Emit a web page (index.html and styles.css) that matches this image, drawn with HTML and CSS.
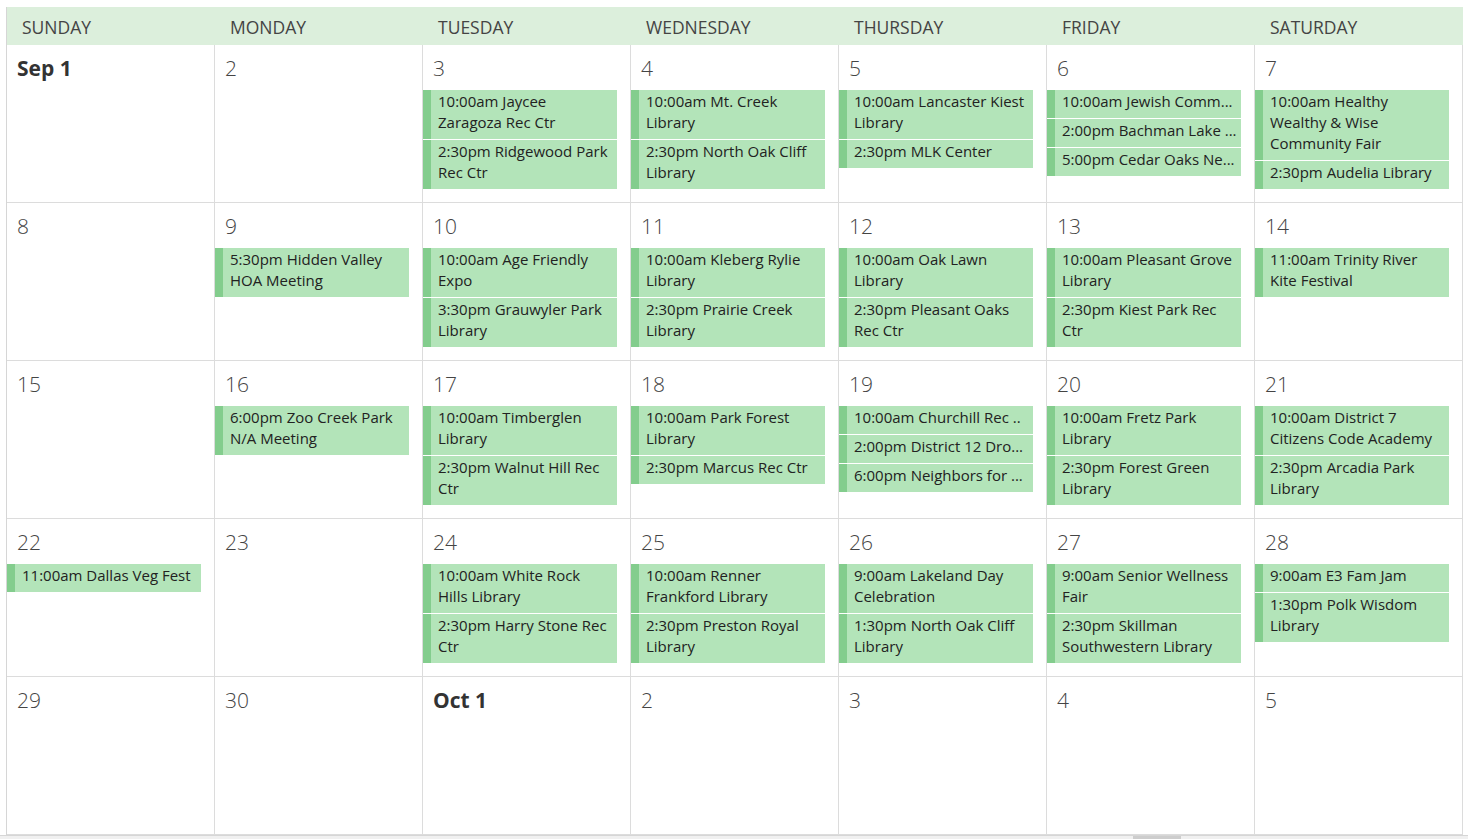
FILE: index.html
```html
<!DOCTYPE html>
<html lang="en">

<head>
    <meta charset="UTF-8">
    <meta name="viewport" content="width=device-width, initial-scale=1.0">
    <title>Calendar - September</title>
    <link rel="stylesheet" href="styles.css">
</head>

<body>
    <div class="calendar">
        <div class="weekdays">
            <div class="weekday">SUNDAY</div>
            <div class="weekday">MONDAY</div>
            <div class="weekday">TUESDAY</div>
            <div class="weekday">WEDNESDAY</div>
            <div class="weekday">THURSDAY</div>
            <div class="weekday">FRIDAY</div>
            <div class="weekday">SATURDAY</div>
        </div>

        <div class="week">
            <div class="day"><div class="num first">Sep 1</div></div>
            <div class="day"><div class="num">2</div></div>
            <div class="day">
                <div class="num">3</div>
                <div class="event">10:00am Jaycee<br>Zaragoza Rec Ctr</div>
                <div class="event">2:30pm Ridgewood Park<br>Rec Ctr</div>
            </div>
            <div class="day">
                <div class="num">4</div>
                <div class="event">10:00am Mt. Creek<br>Library</div>
                <div class="event">2:30pm North Oak Cliff<br>Library</div>
            </div>
            <div class="day">
                <div class="num">5</div>
                <div class="event">10:00am Lancaster Kiest<br>Library</div>
                <div class="event">2:30pm MLK Center</div>
            </div>
            <div class="day">
                <div class="num">6</div>
                <div class="event">10:00am Jewish Comm...</div>
                <div class="event">2:00pm Bachman Lake ...</div>
                <div class="event">5:00pm Cedar Oaks Ne...</div>
            </div>
            <div class="day">
                <div class="num">7</div>
                <div class="event">10:00am Healthy<br>Wealthy &amp; Wise<br>Community Fair</div>
                <div class="event">2:30pm Audelia Library</div>
            </div>
        </div>

        <div class="week">
            <div class="day"><div class="num">8</div></div>
            <div class="day">
                <div class="num">9</div>
                <div class="event">5:30pm Hidden Valley<br>HOA Meeting</div>
            </div>
            <div class="day">
                <div class="num">10</div>
                <div class="event">10:00am Age Friendly<br>Expo</div>
                <div class="event">3:30pm Grauwyler Park<br>Library</div>
            </div>
            <div class="day">
                <div class="num">11</div>
                <div class="event">10:00am Kleberg Rylie<br>Library</div>
                <div class="event">2:30pm Prairie Creek<br>Library</div>
            </div>
            <div class="day">
                <div class="num">12</div>
                <div class="event">10:00am Oak Lawn<br>Library</div>
                <div class="event">2:30pm Pleasant Oaks<br>Rec Ctr</div>
            </div>
            <div class="day">
                <div class="num">13</div>
                <div class="event">10:00am Pleasant Grove<br>Library</div>
                <div class="event">2:30pm Kiest Park Rec<br>Ctr</div>
            </div>
            <div class="day">
                <div class="num">14</div>
                <div class="event">11:00am Trinity River<br>Kite Festival</div>
            </div>
        </div>

        <div class="week">
            <div class="day"><div class="num">15</div></div>
            <div class="day">
                <div class="num">16</div>
                <div class="event">6:00pm Zoo Creek Park<br>N/A Meeting</div>
            </div>
            <div class="day">
                <div class="num">17</div>
                <div class="event">10:00am Timberglen<br>Library</div>
                <div class="event">2:30pm Walnut Hill Rec<br>Ctr</div>
            </div>
            <div class="day">
                <div class="num">18</div>
                <div class="event">10:00am Park Forest<br>Library</div>
                <div class="event">2:30pm Marcus Rec Ctr</div>
            </div>
            <div class="day">
                <div class="num">19</div>
                <div class="event">10:00am Churchill Rec ..</div>
                <div class="event">2:00pm District 12 Dro...</div>
                <div class="event">6:00pm Neighbors for ...</div>
            </div>
            <div class="day">
                <div class="num">20</div>
                <div class="event">10:00am Fretz Park<br>Library</div>
                <div class="event">2:30pm Forest Green<br>Library</div>
            </div>
            <div class="day">
                <div class="num">21</div>
                <div class="event">10:00am District 7<br>Citizens Code Academy</div>
                <div class="event">2:30pm Arcadia Park<br>Library</div>
            </div>
        </div>

        <div class="week">
            <div class="day">
                <div class="num">22</div>
                <div class="event">11:00am Dallas Veg Fest</div>
            </div>
            <div class="day"><div class="num">23</div></div>
            <div class="day">
                <div class="num">24</div>
                <div class="event">10:00am White Rock<br>Hills Library</div>
                <div class="event">2:30pm Harry Stone Rec<br>Ctr</div>
            </div>
            <div class="day">
                <div class="num">25</div>
                <div class="event">10:00am Renner<br>Frankford Library</div>
                <div class="event">2:30pm Preston Royal<br>Library</div>
            </div>
            <div class="day">
                <div class="num">26</div>
                <div class="event">9:00am Lakeland Day<br>Celebration</div>
                <div class="event">1:30pm North Oak Cliff<br>Library</div>
            </div>
            <div class="day">
                <div class="num">27</div>
                <div class="event">9:00am Senior Wellness<br>Fair</div>
                <div class="event">2:30pm Skillman<br>Southwestern Library</div>
            </div>
            <div class="day">
                <div class="num">28</div>
                <div class="event">9:00am E3 Fam Jam</div>
                <div class="event">1:30pm Polk Wisdom<br>Library</div>
            </div>
        </div>

        <div class="week">
            <div class="day"><div class="num">29</div></div>
            <div class="day"><div class="num">30</div></div>
            <div class="day"><div class="num first">Oct 1</div></div>
            <div class="day"><div class="num">2</div></div>
            <div class="day"><div class="num">3</div></div>
            <div class="day"><div class="num">4</div></div>
            <div class="day"><div class="num">5</div></div>
        </div>
    </div>
    <div class="hscroll"><div class="thumb"></div></div>
</body>

</html>
```

FILE: styles.css
```css
body {
    font-family: "Open Sans", "Noto Sans", sans-serif;
    margin: 0;
    background-color: #fff;
    color: #222;
    overflow: hidden;
}

.calendar {
    margin: 7px 0 0 6px;
    border-left: 1px solid #d6d6d6;
    width: 1456px;
}

.weekdays {
    display: grid;
    grid-template-columns: repeat(7, 208px);
    height: 38px;
    background-color: #dcefdc;
}

.weekday {
    padding: 8px 0 0 15px;
    font-size: 17.5px;
    line-height: 24px;
    color: #444;
}

.week {
    display: grid;
    grid-template-columns: repeat(7, 208px);
    height: 158px;
    border-bottom: 1px solid #dcdcdc;
    box-sizing: border-box;
}

.week:first-of-type {
    height: 157px;
}

.day {
    border-right: 1px solid #dcdcdc;
    overflow: hidden;
}

.num {
    height: 45px;
    padding: 8px 0 0 10px;
    box-sizing: border-box;
    font-size: 21px;
    font-weight: 300;
    color: #444;
    line-height: 30px;
}

.num.first {
    font-weight: 700;
    color: #333;
}

.event {
    width: 194px;
    box-sizing: border-box;
    margin-bottom: 1px;
    padding: 1px 2px 6px 15px;
    background: linear-gradient(to right, #83cd8d 0, #83cd8d 8px, #b3e4b9 8px);
    font-size: 15px;
    line-height: 21px;
    white-space: nowrap;
    overflow: hidden;
}

.hscroll {
    height: 5px;
    background-color: #f0f0f0;
    border-top: 1px solid #d6d6d6;
}

.thumb {
    margin-left: 1133px;
    width: 48px;
    height: 5px;
    background-color: #cdcdcd;
}
```
